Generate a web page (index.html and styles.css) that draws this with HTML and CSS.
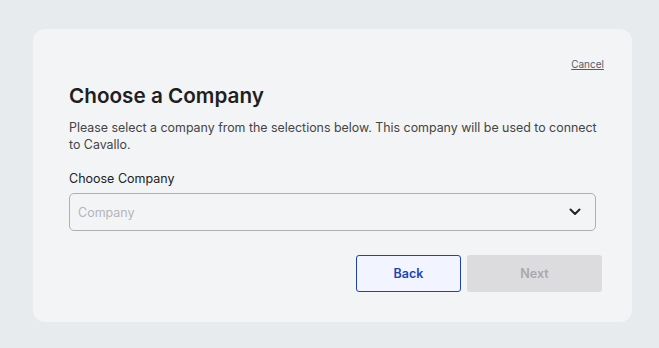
FILE: index.html
```html
<!DOCTYPE html>
<html lang="en">
<head>
  <meta charset="UTF-8">
  <title>Choose a Company</title>
  <link rel="stylesheet" href="styles.css">
</head>
<body>
  <div class="card">
    <div class="cancel-row">
      <a href="#" class="cancel-link">Cancel</a>
    </div>
    <h1>Choose a Company</h1>
    <p class="intro">Please select a company from the selections below. This company will be used to connect to Cavallo.</p>

    <label class="field-label">Choose Company</label>
    <div class="select-box">
      <span class="placeholder">Company</span>
      <svg class="chevron" width="12" height="8" viewBox="0 0 12 8">
        <path d="M1.5 1.5 L6 6 L10.5 1.5" fill="none" stroke="#222" stroke-width="2" stroke-linecap="round" stroke-linejoin="round"/>
      </svg>
    </div>

    <div class="actions">
      <button class="btn-back">Back</button>
      <button class="btn-next" disabled>Next</button>
    </div>
  </div>
</body>
</html>
```

FILE: styles.css
```css
body {
  margin: 0;
  padding: 29px 27px 26px 33px;
  background: #e8ebee;
  font-family: Inter, "Noto Sans", sans-serif;
  color: #222;
}

.card {
  background: #f3f4f6;
  border-radius: 12px;
  padding: 29px 30px 30px 36px;
  height: 234px;
}

.cancel-row {
  display: flex;
  justify-content: flex-end;
  margin-right: -2px;
}

.cancel-link {
  font-size: 10px;
  color: #555b66;
  text-decoration: underline;
}

h1 {
  margin: 13px 0 10px;
  font-size: 20.7px;
  font-weight: 600;
  color: #1f1f1f;
  line-height: 26px;
}

.intro {
  margin: 0 -4px 18px 0;
  font-size: 12.4px;
  line-height: 17px;
  color: #444;
}

.field-label {
  display: block;
  font-size: 12.5px;
  line-height: 16px;
  color: #222;
  margin-bottom: 6px;
}

.select-box {
  box-sizing: border-box;
  display: flex;
  justify-content: space-between;
  align-items: center;
  height: 38px;
  border: 1px solid #b0b0b4;
  border-radius: 5px;
  padding: 0 14px 0 8px;
  margin-right: 6px;
}

.placeholder {
  font-size: 12.5px;
  color: #b5b5b8;
}

.actions {
  display: flex;
  justify-content: flex-end;
  gap: 6px;
  margin-top: 24px;
}

.actions button {
  font-family: inherit;
  font-size: 12.5px;
  font-weight: 600;
  height: 37px;
  border-radius: 3px;
  cursor: pointer;
}

.btn-back {
  width: 105px;
  background: #f2f5ff;
  color: #1b44b8;
  border: 1.5px solid #1b44b8;
}

.btn-next {
  width: 135px;
  background: #dcdcde;
  color: #a8a8ab;
  border: none;
}
```
